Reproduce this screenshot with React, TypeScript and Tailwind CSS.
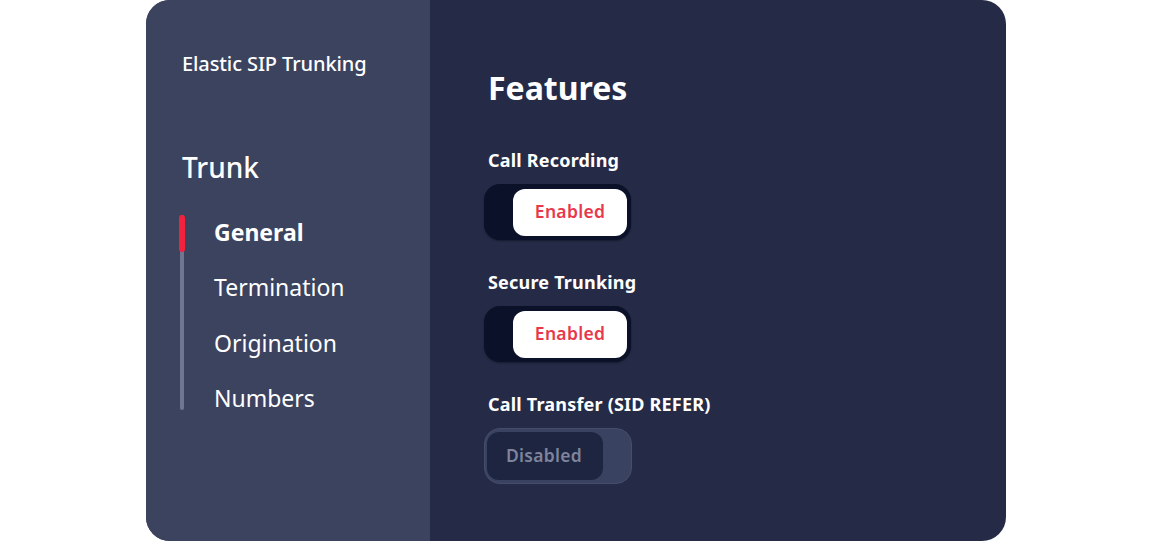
const font = { fontFamily: '"Noto Sans", "Open Sans", sans-serif' };

const NAV = ["General", "Termination", "Origination", "Numbers"];

function Toggle({ on }: { on: boolean }) {
  if (on) {
    return (
      <div className="flex h-[56px] w-[147px] items-center justify-end rounded-[16px] bg-[#0a1128] pr-[4px] shadow-[0_1px_2px_rgba(0,0,0,0.4)]">
        <div className="flex h-[47px] w-[114px] items-center justify-center rounded-[12px] bg-white pb-[1px] text-[17.5px] font-semibold tracking-[0.3px] text-[#e8384d]">
          Enabled
        </div>
      </div>
    );
  }
  return (
    <div className="flex h-[56px] w-[148px] items-center rounded-[16px] border border-[#444d6b] bg-[#394260] pl-[2px]">
      <div className="flex h-[48px] w-[116px] items-center justify-center rounded-[12px] bg-[#1e2541] pb-[1px] pr-[2px] text-[17.5px] font-semibold tracking-[0.3px] text-[#7d849c]">
        Disabled
      </div>
    </div>
  );
}

function Feature({ label, on, top }: { label: string; on: boolean; top: string }) {
  return (
    <div className={top}>
      <p className="h-[24px] text-[18px] font-bold leading-[24px] tracking-[0.2px] text-white">{label}</p>
      <div className="mt-[12px] -ml-[4px]">
        <Toggle on={on} />
      </div>
    </div>
  );
}

export default function App() {
  return (
    <div className="flex h-[542px] w-[1152px] justify-center bg-white" style={font}>
      <div className="flex h-[541px] w-[860px] overflow-hidden rounded-[24px] bg-[#252b47]">
        <aside className="flex w-[284px] flex-col bg-[#3b435f] pl-[36px] pt-[50px]">
          <p className="text-[20px] font-medium leading-[28px] tracking-[-0.1px] text-white">Elastic SIP Trunking</p>
          <p className="mt-[71px] text-[28px] font-medium leading-[36px] text-white">Trunk</p>
          <div className="mt-[20px] -ml-[3px] flex">
            <div className="relative mt-[10px] h-[195px] w-[6px]">
              <div className="absolute left-[1px] top-0 h-full w-[4px] rounded-full bg-[#6e7692]" />
              <div className="absolute left-0 top-0 h-[37px] w-[6px] rounded-full bg-[#f2213c]" />
            </div>
            <ul className="ml-[29px]">
              {NAV.map((item, i) => (
                <li
                  key={item}
                  className={
                    "flex h-[55.3px] items-center text-[23px] leading-none text-white " +
                    (i === 0 ? "font-bold" : "font-normal")
                  }
                >
                  {item}
                </li>
              ))}
            </ul>
          </div>
        </aside>
        <main className="flex flex-1 flex-col pl-[58px] pt-[68px]">
          <h1 className="text-[32px] font-bold leading-[40px] text-white">Features</h1>
          <Feature label="Call Recording" on top="mt-[40px]" />
          <Feature label="Secure Trunking" on top="mt-[30px]" />
          <Feature label="Call Transfer (SID REFER)" on={false} top="mt-[30px]" />
        </main>
      </div>
    </div>
  );
}
